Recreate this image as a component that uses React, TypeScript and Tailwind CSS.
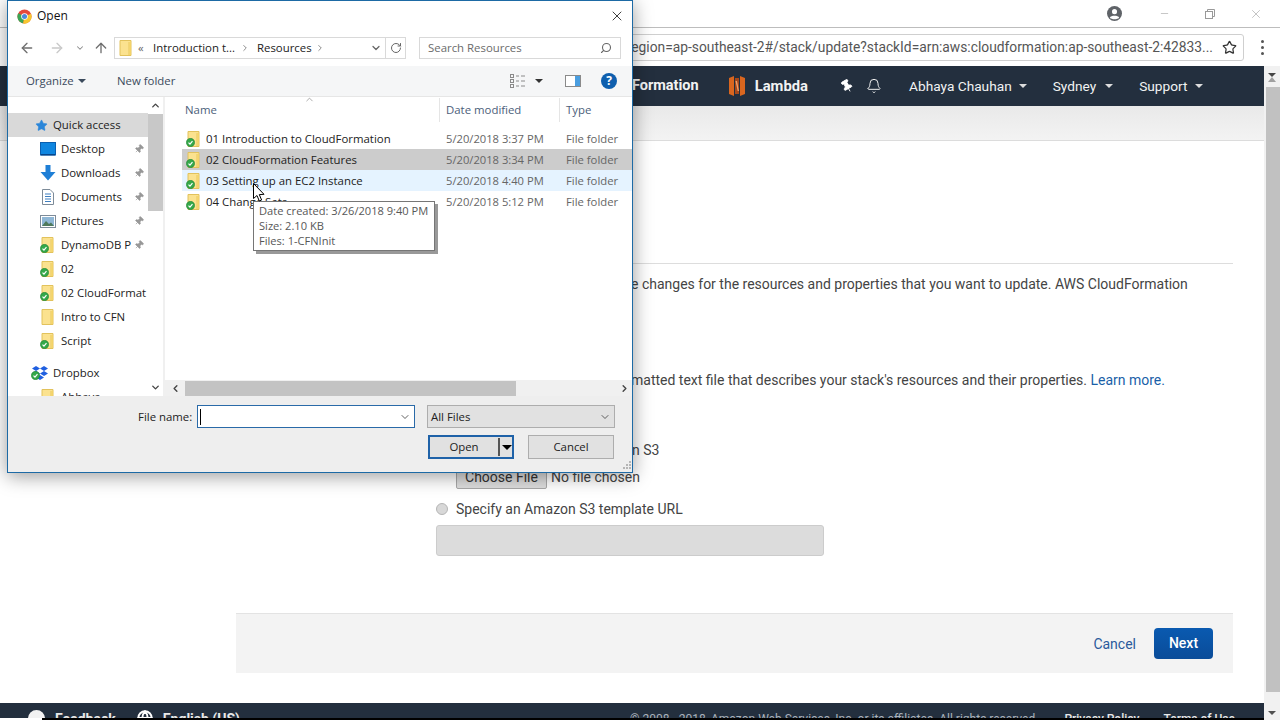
import React from "react";
import { ArrowLeft, ArrowRight, ArrowUp, ChevronDown, ChevronLeft, ChevronRight, ChevronUp, RotateCw, Search, X, Minus, Star, Bell, Pin, Globe } from "lucide-react";

const Check = () => (
  <svg viewBox="0 0 10 10" className="absolute left-[-1px] bottom-[0px] w-[9px] h-[9px]">
    <circle cx="5" cy="5" r="4.6" fill="#35a84a" stroke="#1f7d33" strokeWidth="0.6" />
    <path d="M2.8 5.2 L4.4 6.8 L7.2 3.5" fill="none" stroke="#fff" strokeWidth="1.3" />
  </svg>
);

const FolderIcon = ({ check = true }: { check?: boolean }) => (
  <span className="relative block w-[14px] h-[16px] shrink-0">
    <svg viewBox="0 0 14 16" className="w-[14px] h-[16px]">
      <path d="M1 .5 H12 V15.5 H1 Z" fill="#fbe28f" stroke="#e2c25c" />
      <path d="M10 2 V15" stroke="#e9c95f" strokeWidth="1" />
      <path d="M10.5 2 H12 V15 H10.5 Z" fill="#f4d368" />
    </svg>
    {check && <Check />}
  </span>
);

const ChromeLogo = () => (
  <svg viewBox="0 0 16 16" className="w-[15px] h-[15px]">
    <circle cx="8" cy="8" r="7.5" fill="#e5483a" />
    <path d="M8 8 L1.4 4.4 A7.5 7.5 0 0 0 6.5 15.4 Z" fill="#3aa655" />
    <path d="M8 8 L14.9 5 A7.5 7.5 0 0 1 6.5 15.4 Z" fill="#f7c62f" />
    <circle cx="8" cy="8" r="3.5" fill="#fff" />
    <circle cx="8" cy="8" r="2.7" fill="#4a89dc" />
  </svg>
);

const navRows = [
  { label: "Desktop", icon: "desktop", pin: true },
  { label: "Downloads", icon: "downloads", pin: true },
  { label: "Documents", icon: "documents", pin: true },
  { label: "Pictures", icon: "pictures", pin: true },
  { label: "DynamoDB P", icon: "folder", pin: true },
  { label: "02", icon: "folder" },
  { label: "02 CloudFormat", icon: "folder" },
  { label: "Intro to CFN", icon: "plain" },
  { label: "Script", icon: "folder" },
];

const NavIcon = ({ kind }: { kind: string }) => {
  if (kind === "folder") return <FolderIcon />;
  if (kind === "plain") return <FolderIcon check={false} />;
  if (kind === "desktop")
    return (
      <svg viewBox="0 0 16 14" className="w-[16px] h-[14px]">
        <rect x="0.5" y="0.5" width="15" height="12.5" fill="#0f86e0" stroke="#0a5fb0" />
        <rect x="1" y="12" width="14" height="1.4" fill="#08468a" />
      </svg>
    );
  if (kind === "downloads")
    return (
      <svg viewBox="0 0 16 16" className="w-[16px] h-[16px]">
        <path d="M5.5 0 H10.5 V7 H15.5 L8 15.5 L0.5 7 H5.5 Z" fill="#1f7fd6" />
      </svg>
    );
  if (kind === "documents")
    return (
      <svg viewBox="0 0 12 16" className="w-[12px] h-[16px]">
        <path d="M.5 .5 H8 L11.5 4 V15.5 H.5 Z" fill="#fff" stroke="#7d8b99" />
        <path d="M3 5 H9 M3 7.5 H9 M3 10 H9 M3 12.5 H9" stroke="#3f7fc0" />
      </svg>
    );
  return (
    <svg viewBox="0 0 16 13" className="w-[16px] h-[13px]">
      <rect x="0.5" y="0.5" width="15" height="12" fill="#fff" stroke="#7d8b99" />
      <rect x="2" y="2" width="12" height="9" fill="#8fb7d6" />
      <path d="M2 11 L6 6 L9 9 L11 7.5 L14 11 Z" fill="#4f7a5c" />
    </svg>
  );
};

const files = [
  { name: "01 Introduction to CloudFormation", date: "5/20/2018 3:37 PM", bg: "" },
  { name: "02 CloudFormation Features", date: "5/20/2018 3:34 PM", bg: "bg-[#cccccc]" },
  { name: "03 Setting up an EC2 Instance", date: "5/20/2018 4:40 PM", bg: "bg-[#e5f3ff]" },
  { name: "04 Change Sets", date: "5/20/2018 5:12 PM", bg: "" },
];

const Caret = ({ className = "" }: { className?: string }) => (
  <span className={`block w-0 h-0 border-x-[4px] border-x-transparent border-t-[4px] shrink-0 ${className}`} />
);

function FileDialog() {
  return (
    <div className="absolute left-[7px] top-0 w-[626px] h-[473px] bg-white border border-[#1d6aa5] shadow-[0_3px_18px_rgba(0,0,0,0.4)] flex flex-col font-['Open_Sans',sans-serif] text-[11.4px] text-[#222] z-10">
      {/* title */}
      <div className="h-[30px] flex items-center pl-[9px] pr-[7px] shrink-0">
        <ChromeLogo />
        <span className="ml-[5px] text-[12px] text-[#111]">Open</span>
        <X className="ml-auto w-[16px] h-[16px] text-[#222]" strokeWidth={1.3} />
      </div>
      {/* address */}
      <div className="h-[35px] flex items-center shrink-0 pb-[1px]">
        <ArrowLeft className="ml-[11px] w-[16px] h-[16px] text-[#6f6f6f]" strokeWidth={2} />
        <ArrowRight className="ml-[14px] w-[16px] h-[16px] text-[#c9c9c9]" strokeWidth={2} />
        <ChevronDown className="ml-[10px] w-[10px] h-[10px] text-[#8a8a8a]" strokeWidth={2.5} />
        <ArrowUp className="ml-[8px] w-[16px] h-[16px] text-[#6f6f6f]" strokeWidth={2} />
        <div className="ml-[5px] w-[292px] h-[22px] border border-[#d9d9d9] flex items-center shrink-0">
          <span className="ml-[4px]"><FolderIcon check={false} /></span>
          <span className="ml-[5px] w-[8px] text-[#666]">«</span>
          <span className="ml-[7px] w-[82px] whitespace-nowrap">Introduction t...</span>
          <ChevronRight className="ml-[5px] w-[10px] h-[10px] text-[#777]" strokeWidth={2} />
          <span className="ml-[7px] w-[53px]">Resources</span>
          <ChevronRight className="ml-[5px] w-[10px] h-[10px] text-[#777]" strokeWidth={2} />
          <ChevronDown className="ml-[45px] w-[12px] h-[12px] text-[#666]" strokeWidth={2.5} />
          <span className="ml-[3px] w-px h-[20px] bg-[#d9d9d9]" />
          <RotateCw className="ml-[4px] w-[12px] h-[12px] text-[#666]" strokeWidth={2} />
        </div>
        <div className="ml-[13px] w-[202px] h-[22px] border border-[#d9d9d9] flex items-center pl-[8px] pr-[8px] text-[#6b6b6b] shrink-0">
          <span>Search Resources</span>
          <Search className="ml-auto w-[12px] h-[12px] -scale-x-100 text-[#666]" strokeWidth={2.2} />
        </div>
      </div>
      {/* toolbar */}
      <div className="h-[31px] flex items-center bg-[#f5f6f7] border-b border-[#e6e6e6] shrink-0 text-[#3b4a5c]">
        <span className="ml-[18px] w-[47px]">Organize</span>
        <Caret className="ml-[5px] border-t-[#3b4a5c]" />
        <span className="ml-[31px] w-[58px] whitespace-nowrap">New folder</span>
        <svg viewBox="0 0 16 14" className="ml-[335px] w-[16px] h-[14px] shrink-0" fill="none" stroke="#8a8a8a">
          <rect x="0.5" y="0.5" width="3" height="3" />
          <rect x="0.5" y="5.5" width="3" height="3" />
          <rect x="0.5" y="10.5" width="3" height="3" />
          <path d="M6 2 H9 M11 2 H15 M6 7 H9 M11 7 H15 M6 12 H9 M11 12 H15" />
        </svg>
        <Caret className="ml-[9px] border-t-[#333]" />
        <svg viewBox="0 0 16 12" className="ml-[22px] w-[16px] h-[12px] shrink-0">
          <rect x="0.5" y="0.5" width="15" height="11" fill="#fff" stroke="#8a8a8a" />
          <rect x="10" y="1" width="5" height="10" fill="#4a9ee0" />
        </svg>
        <span className="ml-[20px] w-[16px] h-[16px] rounded-full bg-[#0f5fae] text-white text-[12px] font-bold flex items-center justify-center leading-none shrink-0">?</span>
      </div>
      {/* main */}
      <div className="h-[299px] flex shrink-0 overflow-hidden">
        <div className="w-[140px] overflow-hidden pt-[16px] shrink-0">
          <div className="h-[24px] flex items-center bg-[#d9d9d9] pl-[27px]">
            <Star className="w-[13px] h-[13px] text-[#2b86d9] fill-[#2b86d9]" strokeWidth={1} />
            <span className="ml-[5px]">Quick access</span>
          </div>
          {navRows.map((r) => (
            <div key={r.label} className="h-[24px] flex items-center relative">
              <span className="w-[16px] ml-[32px] flex justify-center shrink-0"><NavIcon kind={r.icon} /></span>
              <span className="ml-[5px] whitespace-nowrap">{r.label}</span>
              {r.pin && <Pin className="absolute right-[4px] top-[7px] w-[10px] h-[10px] text-[#999] fill-[#999] rotate-45" strokeWidth={1.5} />}
            </div>
          ))}
          <div className="h-[24px] flex items-center mt-[8px] pl-[24px]">
            <span className="relative block w-[16px] h-[14px]">
              <svg viewBox="0 0 16 14" className="w-[16px] h-[14px]">
                <path d="M4 0 L8 2.5 L4 5 L0 2.5 Z M12 0 L16 2.5 L12 5 L8 2.5 Z M4 5 L8 7.5 L4 10 L0 7.5 Z M12 5 L16 7.5 L12 10 L8 7.5 Z M8 9 L12 11.5 L8 14 L4 11.5 Z" fill="#1f5fe0" />
              </svg>
              <Check />
            </span>
            <span className="ml-[5px]">Dropbox</span>
          </div>
          <div className="h-[24px] flex items-center">
            <span className="w-[16px] ml-[32px] flex justify-center"><FolderIcon check={false} /></span>
            <span className="ml-[5px]">Abhaya</span>
          </div>
        </div>
        <div className="w-[15px] shrink-0 flex flex-col items-center">
          <ChevronUp className="mt-[3px] w-[11px] h-[11px] text-[#444] shrink-0" strokeWidth={3} />
          <div className="mt-[3px] w-full h-[97px] bg-[#c8c8c8] shrink-0" />
          <ChevronDown className="mt-auto mb-[3px] w-[11px] h-[11px] text-[#444]" strokeWidth={3} />
        </div>
        <div className="w-[2px] bg-[#f0f0f0] shrink-0" />
        <div className="flex-1 flex flex-col min-w-0 relative">
          <div className="h-[24px] flex items-center text-[#4c607a] shrink-0 mt-[1px]">
            <span className="ml-[20px] w-[254px]">Name</span>
            <span className="w-px h-[24px] bg-[#e5e5e5]" />
            <span className="ml-[6px] w-[113px]">Date modified</span>
            <span className="w-px h-[24px] bg-[#e5e5e5]" />
            <span className="ml-[6px]">Type</span>
          </div>
          <ChevronUp className="absolute left-[139px] top-[-3px] w-[11px] h-[11px] text-[#888]" strokeWidth={1.5} />
          <div className="mt-[6px] flex-1 min-h-0">
            {files.map((f) => (
              <div key={f.name} className={`ml-[17px] h-[21px] flex items-center ${f.bg}`}>
                <span className="ml-[5px]"><FolderIcon /></span>
                <span className="ml-[5px] w-[240px] whitespace-nowrap">{f.name}</span>
                <span className="w-[120px] text-[#666] text-[11.2px] pt-[1px]">{f.date}</span>
                <span className="text-[#666] text-[11.3px] pt-[1px]">File folder</span>
              </div>
            ))}
          </div>
          <div className="h-[16px] bg-[#f0f0f0] flex items-center shrink-0">
            <ChevronLeft className="ml-[5px] w-[11px] h-[11px] text-[#444]" strokeWidth={3} />
            <div className="ml-[4px] w-[331px] h-[15px] bg-[#c3c3c3]" />
            <ChevronRight className="ml-auto mr-[2px] w-[11px] h-[11px] text-[#444]" strokeWidth={3} />
          </div>
        </div>
      </div>
      {/* bottom */}
      <div className="flex-1 bg-[#eeeeee] relative">
        <div className="flex items-center pl-[130px] pt-[9px]">
          <span className="w-[54px] whitespace-nowrap">File name:</span>
          <div className="ml-[5px] w-[218px] h-[23px] bg-white border border-[#2a6aa8] flex items-center pl-[2px] pr-[3px]">
            <span className="w-px h-[16px] bg-black" />
            <ChevronDown className="ml-auto w-[12px] h-[12px] text-[#444]" strokeWidth={1.7} />
          </div>
          <div className="ml-[12px] w-[188px] h-[23px] bg-[#e1e1e1] border border-[#adadad] flex items-center pl-[3px] pr-[3px]">
            <span>All Files</span>
            <ChevronDown className="ml-auto w-[12px] h-[12px] text-[#444]" strokeWidth={1.7} />
          </div>
        </div>
        <div className="flex pl-[420px] mt-[7px]">
          <div className="w-[86px] h-[24px] bg-[#e1e1e1] border-2 border-[#1f62a8] flex items-center">
            <span className="w-[68px] text-center">Open</span>
            <span className="w-[2px] h-[18px] bg-[#555]" />
            <Caret className="ml-[2px] border-x-[5px] border-t-[5px] border-t-black" />
          </div>
          <div className="ml-[14px] w-[86px] h-[24px] bg-[#e1e1e1] border border-[#adadad] flex items-center justify-center">Cancel</div>
        </div>
        <svg viewBox="0 0 8 8" className="absolute right-[1px] bottom-[3px] w-[8px] h-[8px]" fill="#b5b5b5">
          <rect x="6" y="0" width="2" height="2" /><rect x="3" y="3" width="2" height="2" /><rect x="6" y="3" width="2" height="2" />
          <rect x="0" y="6" width="2" height="2" /><rect x="3" y="6" width="2" height="2" /><rect x="6" y="6" width="2" height="2" />
        </svg>
      </div>
      {/* tooltip */}
      <div className="absolute left-[245px] top-[200px] w-[182px] h-[50px] bg-white border border-[#767676] shadow-[3px_3px_0_rgba(0,0,0,0.4)] pl-[5px] pt-[1px] text-[#575757] text-[11.1px] leading-[15px] whitespace-nowrap z-20">
        <div>Date created: 3/26/2018 9:40 PM</div>
        <div>Size: 2.10 KB</div>
        <div>Files: 1-CFNInit</div>
      </div>
      {/* pointer */}
      <svg viewBox="0 0 12 19" className="absolute left-[245px] top-[182px] w-[12px] h-[19px] z-30">
        <path d="M.5 .5 V15.5 L4 12.5 L6.3 18 L8.6 17 L6.3 11.6 L11 11.3 Z" fill="#fff" stroke="#000" strokeWidth="1" />
      </svg>
    </div>
  );
}

function Browser() {
  return (
    <div className="w-[1280px] h-[720px] flex flex-col font-['Roboto',sans-serif] text-[14px] text-[#444] bg-white overflow-hidden">
      {/* title bar */}
      <div className="h-[28px] flex items-center justify-end border-b border-[#bdbdbd] shrink-0 pr-[17px]">
        <svg viewBox="0 0 16 16" className="w-[15px] h-[15px]">
          <circle cx="8" cy="8" r="8" fill="#5f6368" />
          <circle cx="8" cy="6" r="2.7" fill="#fff" />
          <path d="M3 12.5 C4 9.8 12 9.8 13 12.5 C11 14.6 5 14.6 3 12.5 Z" fill="#fff" />
        </svg>
        <Minus className="ml-[37px] w-[11px] h-[11px] text-[#999]" strokeWidth={1.2} />
        <svg viewBox="0 0 10 10" className="ml-[35px] w-[10px] h-[10px]" fill="none" stroke="#999">
          <rect x="0.5" y="2.5" width="7" height="7" />
          <path d="M2.5 2.5 V.5 H9.5 V7.5 H7.5" />
        </svg>
        <X className="ml-[34px] w-[14px] h-[14px] text-[#999]" strokeWidth={1} />
      </div>
      {/* address */}
      <div className="h-[38px] flex items-center shrink-0">
        <div className="ml-[560px] w-[684px] h-[27px] border border-[#cfcfcf] rounded-[3px] flex items-center justify-end pr-[6px] text-[#555] text-[13.8px] whitespace-nowrap shrink-0">
          <span>egion=ap-southeast-2#/stack/update?stackId=arn:aws:cloudformation:ap-southeast-2:42833...</span>
          <Star className="ml-[9px] w-[15px] h-[15px] text-[#333] shrink-0" strokeWidth={2} />
        </div>
        <span className="ml-[17px] flex flex-col gap-[3px]">
          <i className="block w-[3px] h-[3px] bg-[#555] rounded-full" />
          <i className="block w-[3px] h-[3px] bg-[#555] rounded-full" />
          <i className="block w-[3px] h-[3px] bg-[#555] rounded-full" />
        </span>
      </div>
      {/* body */}
      <div className="flex-1 flex min-h-0">
        <div className="w-[1264px] flex flex-col">
          <div className="h-[40px] bg-[#232f3e] flex items-center text-[#f2f3f3] text-[13.7px] shrink-0 whitespace-nowrap">
            <span className="ml-[632px] font-bold text-[14.5px]">Formation</span>
            <svg viewBox="0 0 16 20" className="ml-[30px] w-[16px] h-[20px]">
              <path d="M0 2 L5 0 V20 L0 18 Z M11 0 L16 2 V18 L11 20 Z" fill="#d9661f" />
              <path d="M6 2 H10 V18 H6 Z" fill="#a8481a" />
              <path d="M6.5 5 H8 L10 15 H8.7 Z" fill="#eda06c" />
            </svg>
            <span className="ml-[10px] font-bold text-[14.8px]">Lambda</span>
            <Pin className="ml-[32px] w-[14px] h-[14px] text-white fill-white rotate-[-30deg]" strokeWidth={1.5} />
            <Bell className="ml-[12px] w-[16px] h-[16px] text-[#eee]" strokeWidth={1.5} />
            <span className="ml-[27px]">Abhaya Chauhan</span>
            <Caret className="ml-[7px] border-t-[#ddd]" />
            <span className="ml-[26px]">Sydney</span>
            <Caret className="ml-[9px] border-t-[#ddd]" />
            <span className="ml-[26px]">Support</span>
            <Caret className="ml-[8px] border-t-[#ddd]" />
          </div>
          <div className="h-[35px] bg-gradient-to-b from-[#e9e9e9] to-[#f3f3f3] border-b border-[#dcdcdc] shrink-0" />
          <div className="flex-1 flex flex-col min-h-0 relative">
            <div className="h-px bg-[#dddddd] ml-[236px] mr-[31px] mt-[122px] shrink-0" />
            <p className="mt-[10px] ml-[631px] h-[20px] leading-[20px] whitespace-nowrap">e changes for the resources and properties that you want to update. AWS CloudFormation</p>
            <p className="mt-[76px] ml-[631px] h-[20px] leading-[20px] whitespace-nowrap">matted text file that describes your stack's resources and their properties. <span className="text-[#1a5fa8]">Learn more.</span></p>
            <p className="mt-[50px] ml-[632px] h-[20px] leading-[20px]">n S3</p>
            <div className="mt-[5px] ml-[456px] flex items-center h-[24px] whitespace-nowrap">
              <span className="w-[91px] h-[24px] bg-[#dddddd] border border-[#a8a8a8] rounded-[2px] flex items-center justify-center text-[#333]">Choose File</span>
              <span className="ml-[4px] text-[#444]">No file chosen</span>
            </div>
            <div className="mt-[10px] ml-[436px] flex items-center h-[20px]">
              <span className="w-[12px] h-[12px] rounded-full border border-[#b5b5b5] bg-[#d8d8d8]" />
              <span className="ml-[8px]">Specify an Amazon S3 template URL</span>
            </div>
            <div className="mt-[6px] ml-[436px] w-[388px] h-[31px] bg-[#dcdcdc] border border-[#cccccc] rounded-[3px]" />
            <div className="mt-[57px] ml-[236px] mr-[31px] h-[60px] bg-[#f3f3f3] border-t border-[#e3e3e3] flex items-center justify-end pr-[20px]">
              <span className="text-[#2a5a9c] mt-[1px]">Cancel</span>
              <span className="ml-[18px] w-[59px] h-[31px] rounded-[4px] bg-gradient-to-b from-[#0a5ab0] to-[#0a4c99] text-white font-medium flex items-center justify-center">Next</span>
            </div>
            <div className="mt-auto h-[15px] bg-[#232f3e] overflow-hidden text-[#e8e8e8] flex whitespace-nowrap shrink-0 pt-[6px] leading-[20px]">
              <span className="ml-[28px] mt-[1px] w-[17px] h-[17px] rounded-full bg-[#f2f2f2] shrink-0" />
              <span className="ml-[10px] font-bold shrink-0">Feedback</span>
              <Globe className="ml-[21px] mt-[1px] w-[16px] h-[16px] text-white shrink-0" strokeWidth={3} />
              <span className="ml-[10px] font-bold shrink-0">English (US)</span>
              <span className="ml-[390px] text-[#aab2bb] text-[12px] shrink-0">© 2008 - 2018, Amazon Web Services, Inc. or its affiliates. All rights reserved.</span>
              <span className="ml-[26px] font-medium text-[12px] shrink-0">Privacy Policy</span>
              <span className="ml-[24px] font-medium text-[12px] shrink-0">Terms of Use</span>
            </div>
            <div className="h-[2px] ml-[42px] bg-black shrink-0" />
          </div>
        </div>
        <div className="w-[16px] bg-[#f1f1f1] flex flex-col items-center">
          <Caret className="mt-[7px] border-b-[5px] border-t-0 border-b-[#a0a0a0]" />
          <div className="mt-[5px] ml-[2px] w-[14px] h-[605px] bg-[#c1c1c1]" />
          <Caret className="mt-[19px] border-t-[#505050]" />
        </div>
      </div>
    </div>
  );
}

export default function App() {
  return (
    <div className="relative w-[1280px] h-[720px] overflow-hidden">
      <Browser />
      <FileDialog />
    </div>
  );
}
